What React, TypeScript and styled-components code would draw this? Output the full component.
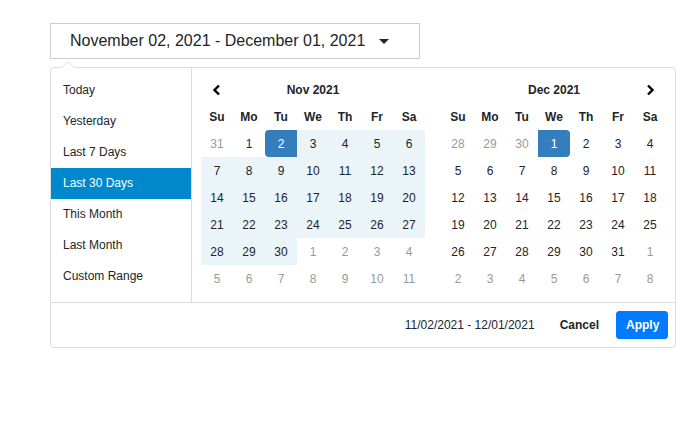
import styled, { createGlobalStyle } from "styled-components";

const GlobalStyle = createGlobalStyle`
  html, body {
    margin: 0;
    padding: 0;
    background: #fff;
    font-family: "Liberation Sans", Arial, sans-serif;
    color: #212529;
  }
`;

type Cell = { day: number; off?: boolean; inRange?: boolean; start?: boolean; end?: boolean };

const weekdays = ["Su", "Mo", "Tu", "We", "Th", "Fr", "Sa"];
const ranges = ["Today", "Yesterday", "Last 7 Days", "Last 30 Days", "This Month", "Last Month", "Custom Range"];

const novDays: Cell[] = [
  { day: 31, off: true },
  { day: 1 },
  { day: 2, start: true },
  ...Array.from({ length: 28 }, (_, i) => ({ day: i + 3, inRange: true })),
  ...Array.from({ length: 11 }, (_, i) => ({ day: i + 1, off: true })),
];

const decDays: Cell[] = [
  { day: 28, off: true },
  { day: 29, off: true },
  { day: 30, off: true },
  { day: 1, end: true },
  ...Array.from({ length: 30 }, (_, i) => ({ day: i + 2 })),
  ...Array.from({ length: 8 }, (_, i) => ({ day: i + 1, off: true })),
];

const Chevron = ({ dir }: { dir: "left" | "right" }) => (
  <svg width="10" height="12" viewBox="0 0 10 12">
    <polyline
      points={dir === "left" ? "7,1.5 2.5,6 7,10.5" : "3,1.5 7.5,6 3,10.5"}
      fill="none"
      stroke="#000"
      strokeWidth="2.4"
    />
  </svg>
);

const Calendar = ({
  title,
  days,
  side,
}: {
  title: string;
  days: Cell[];
  side: "left" | "right";
}) => {
  const rows: Cell[][] = [];
  for (let i = 0; i < days.length; i += 7) rows.push(days.slice(i, i + 7));
  return (
    <CalendarPanel side={side}>
      <Table>
        <thead>
          <tr>
            <NavCell>{side === "left" && <Chevron dir="left" />}</NavCell>
            <MonthCell colSpan={5}>{title}</MonthCell>
            <NavCell>{side === "right" && <Chevron dir="right" />}</NavCell>
          </tr>
          <tr>
            {weekdays.map((w) => (
              <WeekCell key={w}>{w}</WeekCell>
            ))}
          </tr>
        </thead>
        <tbody>
          {rows.map((row, r) => (
            <tr key={r}>
              {row.map((c, k) => (
                <DayCell
                  key={k}
                  $off={c.off}
                  $inRange={c.inRange}
                  $start={c.start}
                  $end={c.end}
                >
                  {c.day}
                </DayCell>
              ))}
            </tr>
          ))}
        </tbody>
      </Table>
    </CalendarPanel>
  );
};

const App = () => {
  return (
    <>
      <GlobalStyle />
      <Page>
        <Trigger>
          <span>November 02, 2021 - December 01, 2021</span>
          <Caret />
        </Trigger>
        <Dropdown>
          <Main>
            <Ranges>
              {ranges.map((r) => (
                <RangeItem key={r} $active={r === "Last 30 Days"}>
                  {r}
                </RangeItem>
              ))}
            </Ranges>
            <Calendar title="Nov 2021" days={novDays} side="left" />
            <Calendar title="Dec 2021" days={decDays} side="right" />
          </Main>
          <Footer>
            <SelectedText>11/02/2021 - 12/01/2021</SelectedText>
            <CancelBtn>Cancel</CancelBtn>
            <ApplyBtn>Apply</ApplyBtn>
          </Footer>
        </Dropdown>
      </Page>
    </>
  );
};

export default App;

const Page = styled.div`
  padding: 23px 0 0 50px;
  width: 626px;
`;

const Trigger = styled.div`
  box-sizing: border-box;
  width: 370px;
  height: 36px;
  border: 1px solid #ccc;
  display: flex;
  align-items: center;
  padding-left: 19px;
  font-size: 16px;
  color: #212529;
  background: #fff;
`;

const Caret = styled.span`
  margin-left: 14px;
  width: 0;
  height: 0;
  border-left: 5px solid transparent;
  border-right: 5px solid transparent;
  border-top: 5px solid #212529;
  margin-top: 1px;
`;

const Dropdown = styled.div`
  position: relative;
  margin-top: 8px;
  width: 626px;
  box-sizing: border-box;
  border: 1px solid #ddd;
  border-radius: 4px;
  background: #fff;

  &::before {
    content: "";
    position: absolute;
    top: -7px;
    left: 10px;
    border-left: 7px solid transparent;
    border-right: 7px solid transparent;
    border-bottom: 7px solid #ddd;
  }

  &::after {
    content: "";
    position: absolute;
    top: -6px;
    left: 11px;
    border-left: 6px solid transparent;
    border-right: 6px solid transparent;
    border-bottom: 6px solid #fff;
  }
`;

const Main = styled.div`
  display: flex;
`;

const Ranges = styled.ul`
  list-style: none;
  margin: 0;
  padding: 7px 0 0;
  width: 140px;
  border-right: 1px solid #ddd;
`;

const RangeItem = styled.li<{ $active?: boolean }>`
  height: 31px;
  line-height: 31px;
  padding-left: 12px;
  font-size: 12px;
  color: ${(p) => (p.$active ? "#fff" : "#212529")};
  background: ${(p) => (p.$active ? "#08c" : "transparent")};
`;

const CalendarPanel = styled.div<{ side: "left" | "right" }>`
  padding: ${(p) => (p.side === "left" ? "8px 9px 10px 9px" : "8px 9px 10px 8px")};
`;

const Table = styled.table`
  border-collapse: collapse;
  border-spacing: 0;
  width: 224px;
  table-layout: fixed;
`;

const NavCell = styled.th`
  width: 32px;
  height: 27px;
  padding: 0;
  text-align: center;
  vertical-align: middle;

  svg {
    display: block;
    margin: 1px auto 0;
  }
`;

const MonthCell = styled.th`
  height: 27px;
  padding: 0;
  font-size: 12px;
  font-weight: bold;
  color: #212529;
  text-align: center;
`;

const WeekCell = styled.th`
  width: 32px;
  height: 27px;
  padding: 0;
  font-size: 12px;
  font-weight: bold;
  color: #212529;
  text-align: center;
`;

const DayCell = styled.td<{ $off?: boolean; $inRange?: boolean; $start?: boolean; $end?: boolean }>`
  width: 32px;
  height: 27px;
  padding: 0;
  font-size: 12px;
  text-align: center;
  color: ${(p) => (p.$off ? "#999" : p.$start || p.$end ? "#fff" : "#212529")};
  background: ${(p) =>
    p.$start || p.$end ? "#357ebd" : p.$inRange ? "#ebf4f8" : "#fff"};
  border-radius: ${(p) => (p.$start ? "4px 0 0 4px" : p.$end ? "0 4px 4px 0" : "0")};
`;

const Footer = styled.div`
  display: flex;
  align-items: center;
  justify-content: flex-end;
  border-top: 1px solid #ddd;
  padding: 8px 7px 8px 8px;
`;

const SelectedText = styled.span`
  font-size: 12px;
  color: #212529;
  margin-right: 16px;
`;

const Button = styled.button`
  font-family: "Liberation Sans", Arial, sans-serif;
  font-size: 12px;
  font-weight: bold;
  height: 28px;
  padding: 0 9px;
  border-radius: 3px;
  border: 1px solid transparent;
  cursor: pointer;
`;

const CancelBtn = styled(Button)`
  background: transparent;
  color: #212529;
  margin-right: 8px;
  padding: 0 8px;
`;

const ApplyBtn = styled(Button)`
  background: #007bff;
  border-color: #007bff;
  color: #fff;
  width: 52px;
`;
